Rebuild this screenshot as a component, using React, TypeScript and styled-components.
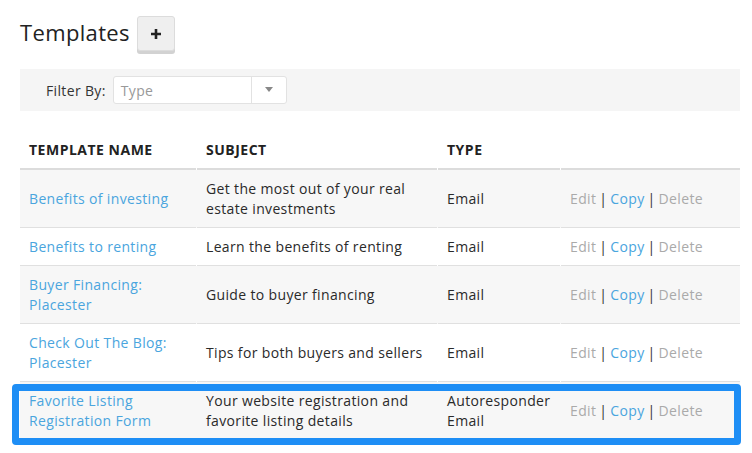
import React, { FC } from 'react';
import styled, { createGlobalStyle } from 'styled-components';

type Template = {
    name: string;
    subject: string;
    type: string;
    highlighted?: boolean;
};

const templates: Array<Template> = [
    { name: 'Benefits of investing', subject: 'Get the most out of your real estate investments', type: 'Email' },
    { name: 'Benefits to renting', subject: 'Learn the benefits of renting', type: 'Email' },
    { name: 'Buyer Financing: Placester', subject: 'Guide to buyer financing', type: 'Email' },
    { name: 'Check Out The Blog: Placester', subject: 'Tips for both buyers and sellers', type: 'Email' },
    {
        name: 'Favorite Listing Registration Form',
        subject: 'Your website registration and favorite listing details',
        type: 'Autoresponder Email',
        highlighted: true,
    },
];

const App: FC = () => {
    return (
        <Page>
            <GlobalStyle />
            <TitleRow>
                <Title>Templates</Title>
                <AddButton aria-label="Add template">
                    <svg width="12" height="12" viewBox="0 0 12 12">
                        <path d="M6 1v10M1 6h10" stroke="#222" strokeWidth="2.6" />
                    </svg>
                </AddButton>
            </TitleRow>
            <FilterBar>
                <FilterLabel>Filter By:</FilterLabel>
                <Select>
                    <SelectValue>Type</SelectValue>
                    <SelectArrow>
                        <svg width="8" height="6" viewBox="0 0 8 6">
                            <path d="M0 0h8L4 5z" fill="#888" />
                        </svg>
                    </SelectArrow>
                </Select>
            </FilterBar>
            <Table>
                <HeadRow>
                    <HeadCell>Template Name</HeadCell>
                    <HeadCell>Subject</HeadCell>
                    <HeadCell>Type</HeadCell>
                    <HeadCell />
                </HeadRow>
                {templates.map((t, i) => (
                    <Row key={t.name} $striped={i % 2 === 0}>
                        <Cell>
                            <NameLink href="#">{t.name}</NameLink>
                        </Cell>
                        <Cell>{t.subject}</Cell>
                        <Cell>{t.type}</Cell>
                        <Cell>
                            <Action>Edit</Action>
                            <Sep>|</Sep>
                            <Action $active>Copy</Action>
                            <Sep>|</Sep>
                            <Action>Delete</Action>
                        </Cell>
                        {t.highlighted && <Highlight />}
                    </Row>
                ))}
            </Table>
        </Page>
    );
};

const GlobalStyle = createGlobalStyle`
    body {
        margin: 0;
        background: #fff;
        font-family: "Open Sans", sans-serif;
        letter-spacing: 0.35px;
        color: #2a2a2a;
    }
`;

const Page = styled.div`
    padding: 15px 12px 14px 20px;
`;

const TitleRow = styled.div`
    display: flex;
    align-items: flex-start;
    gap: 7px;
`;

const Title = styled.h1`
    margin: 0;
    font-size: 22px;
    font-weight: 400;
    line-height: 34px;
    color: #222;
`;

const AddButton = styled.button`
    display: flex;
    align-items: center;
    justify-content: center;
    width: 38px;
    height: 35px;
    margin-top: 1px;
    padding: 0;
    border: 1px solid #dcdcdc;
    border-radius: 3px;
    background: #efefef;
    box-shadow: 0 3px 0 #d2d2d2;
`;

const FilterBar = styled.div`
    display: flex;
    align-items: center;
    gap: 7px;
    margin-top: 18px;
    padding: 7px 26px;
    background: #f5f5f5;
`;

const FilterLabel = styled.span`
    font-size: 14px;
    color: #333;
`;

const Select = styled.div`
    display: flex;
    width: 174px;
    height: 28px;
    box-sizing: border-box;
    border: 1px solid #e2e2e2;
    border-radius: 3px;
    background: #fff;
`;

const SelectValue = styled.span`
    flex: 1;
    display: flex;
    align-items: center;
    padding-left: 7px;
    font-size: 14px;
    color: #999;
`;

const SelectArrow = styled.span`
    display: flex;
    align-items: center;
    justify-content: center;
    width: 34px;
    border-left: 1px solid #e2e2e2;
`;

const Table = styled.div`
    margin-top: 20px;
`;

const cols = '176px 240px 122px 1fr';

const HeadRow = styled.div`
    display: grid;
    grid-template-columns: ${cols};
    column-gap: 1px;
`;

const HeadCell = styled.div`
    padding: 9px 9px 8px;
    line-height: 20px;
    font-size: 14px;
    font-weight: 700;
    letter-spacing: 0.5px;
    text-transform: uppercase;
    color: #222;
    border-bottom: 2px solid #dcdcdc;
`;

const Row = styled.div<{ $striped: boolean }>`
    position: relative;
    display: grid;
    grid-template-columns: ${cols};
    column-gap: 1px;
    background: ${p => (p.$striped ? '#f7f7f7' : '#fff')};
`;

const Highlight = styled.div`
    position: absolute;
    top: 2px;
    left: -8px;
    right: -1px;
    height: 61px;
    box-sizing: border-box;
    border: 7px solid #1e8ef5;
    border-radius: 4px;
    pointer-events: none;
`;

const Cell = styled.div`
    display: flex;
    align-items: center;
    flex-wrap: wrap;
    padding: 9px 9px 8px;
    line-height: 20px;
    font-size: 14px;
    color: #2a2a2a;
    border-bottom: 1px solid #e0e0e0;
`;

const NameLink = styled.a`
    color: #4aa5de;
    text-decoration: none;
`;

const Action = styled.span<{ $active?: boolean }>`
    color: ${p => (p.$active ? '#4aa5de' : '#aaaaaa')};
`;

const Sep = styled.span`
    margin: 0 3px;
    color: #333;
`;

export default App;
